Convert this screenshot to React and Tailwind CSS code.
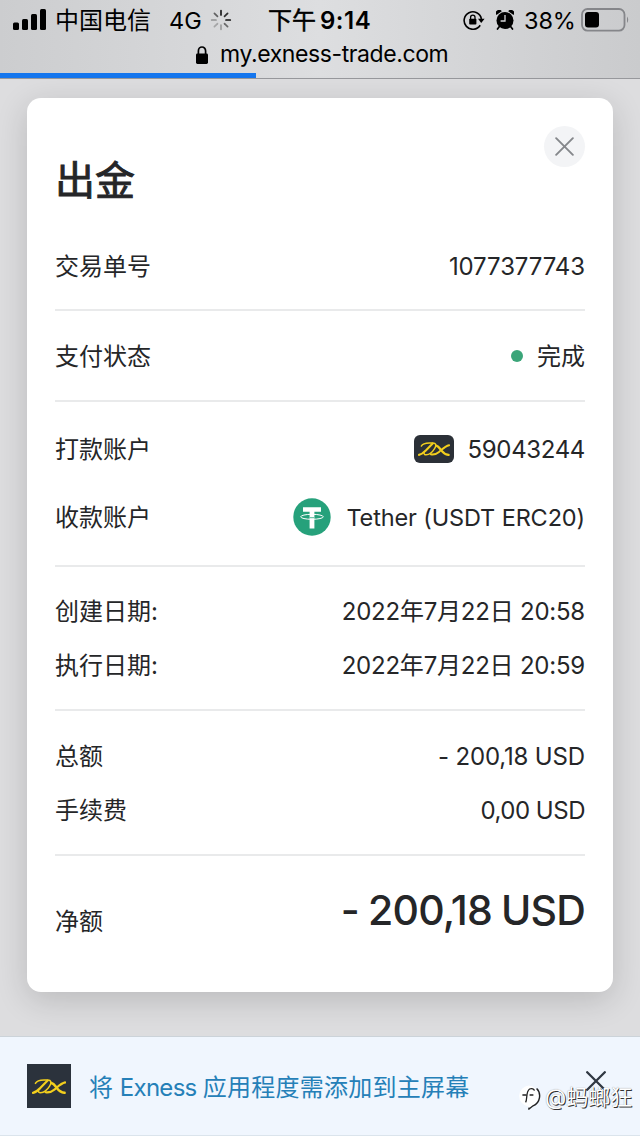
import React from "react";

const CJK = "font-['Inter','Noto_Sans_CJK_SC',sans-serif]";

function ExMark({ className }) {
  return (
    <svg viewBox="0 0 34 15" className={className} fill="none" stroke="#f3cf1d" strokeLinecap="round">
      <path d="M0.9 13.8C4.4 13.2 6 11.4 8.5 8.8L15.6 1.6" strokeWidth="2.2" />
      <path d="M3.4 4.4C4.8 1.6 8 1 12 1H15.4C19.6 1 19.6 4 17.6 7.2C15.4 10.8 12 13.7 8.6 13.7C6.8 13.7 6 12.8 6.4 11.2" strokeWidth="1.5" />
      <path d="M19.4 4C22 4.6 23.2 7 25 9.2C27 11.8 29 13.4 32.6 13.8" strokeWidth="2.5" />
      <path d="M33.2 3.4C28.6 4.4 25.6 8 22.4 10.6C20 12.6 17 13.8 13.6 13.2" strokeWidth="2.1" />
    </svg>
  );
}

function Tether() {
  return (
    <svg viewBox="0 0 38 38" className="h-[38px] w-[38px]">
      <circle cx="19" cy="19" r="18.7" fill="#26a17b" />
      <path d="M10 9.3H28V13.8H21.4V30.5H16.6V13.8H10Z" fill="#fff" />
      <ellipse cx="19" cy="18.8" rx="11.3" ry="2.5" fill="none" stroke="#fff" strokeWidth="1" />
      <path d="M16.8 19.7H21.2" stroke="#26a17b" strokeWidth="0.8" />
    </svg>
  );
}

function Signal() {
  return (
    <svg viewBox="0 0 33 22" className="h-[22px] w-[33px]">
      <rect x="0" y="13.5" width="6" height="7.5" rx="1.5" />
      <rect x="9" y="10" width="6" height="11" rx="1.5" />
      <rect x="18" y="5" width="6" height="16" rx="1.5" />
      <rect x="27" y="0" width="6" height="21" rx="1.5" />
    </svg>
  );
}

const SPOKES = [
  [0, 0.95], [45, 0.85], [90, 1], [135, 0.55], [180, 0.3], [225, 0.25], [270, 0.35], [315, 0.6],
];

function Spinner() {
  return (
    <svg viewBox="-11 -11 22 22" className="h-[22px] w-[22px]">
      {SPOKES.map(([angle, opacity]) => (
        <path key={angle} d="M0 -5V-9.3" transform={`rotate(${angle})`} stroke="#111" strokeWidth="1.7" strokeLinecap="round" opacity={opacity} />
      ))}
    </svg>
  );
}

function RotationLock() {
  return (
    <svg viewBox="0 0 22 20" className="h-[20px] w-[22px]" fill="none" stroke="#000" strokeWidth="1.6">
      <path d="M17.2 15.2A8.7 8.7 0 1 1 18.4 9" />
      <path d="M15 8.8H21.6L18.2 13Z" fill="#000" stroke="none" />
      <rect x="6.2" y="8.8" width="7.2" height="5.8" rx="0.8" fill="#000" stroke="none" />
      <path d="M7.6 9V7.3A2.2 2.2 0 0 1 12 7.3V9" strokeWidth="1.3" />
    </svg>
  );
}

function Alarm() {
  return (
    <svg viewBox="0 0 18 20" className="h-[20px] w-[18px]">
      <circle cx="9" cy="10.6" r="8.5" />
      <path d="M0.4 5A3 3 0 0 1 5.8 1.2ZM17.6 5A3 3 0 0 0 12.2 1.2Z" />
      <path d="M3.4 16.5L1.5 19M14.6 16.5L16.5 19" stroke="#000" strokeWidth="1.7" strokeLinecap="round" />
      <path d="M9 5V11H4.6" fill="none" stroke="#d4d5d7" strokeWidth="1.3" />
    </svg>
  );
}

function Battery() {
  return (
    <svg viewBox="0 0 48 24" className="h-[24px] w-[48px]">
      <rect x="1" y="1" width="42.5" height="21.6" rx="5.5" fill="none" stroke="#85868a" strokeWidth="1.8" />
      <rect x="4" y="4" width="14" height="15.4" rx="3" fill="#000" />
      <path d="M46 8.5Q48.4 11.6 46 15Z" fill="#85868a" />
    </svg>
  );
}

function PadLock() {
  return (
    <svg viewBox="0 0 12 18" className="h-[18px] w-[12px]">
      <rect x="0" y="7.6" width="12" height="10.4" rx="1.4" />
      <path d="M2.4 8.4V4.9A3.6 3.9 0 0 1 9.6 4.9V8.4" fill="none" stroke="#000" strokeWidth="1.7" />
    </svg>
  );
}

function Cross({ className, color, width }) {
  return (
    <svg viewBox="0 0 20 20" className={className} fill="none" stroke={color} strokeWidth={width} strokeLinecap="round">
      <path d="M1.2 1.2L18.8 18.8M18.8 1.2L1.2 18.8" />
    </svg>
  );
}

function WatermarkBadge() {
  return (
    <svg viewBox="0 0 24 26" className="h-[26px] w-[24px]">
      <path d="M11 1.5A10.6 10.6 0 0 1 14.6 21.6L10.6 24.8L10.4 22.4A10.5 10.5 0 0 1 11 1.5Z" fill="#fff" />
      <path d="M18.6 4.4C23.6 9 22.4 19 15 21.8L11 25L10.8 23.6" fill="none" stroke="#222" strokeWidth="1.4" />
      <path d="M4.4 11H8.2M7.6 18.4C9.6 15.4 7.6 7.4 11.6 5C14 4 16 5 16.4 6.6M11.6 11H15.4" fill="none" stroke="#222" strokeWidth="1.3" />
    </svg>
  );
}

function Row({ label, height, children }) {
  return (
    <div className={`flex items-center justify-between ${height}`}>
      <span className="pt-0.5">{label}</span>
      <div className="flex items-center">{children}</div>
    </div>
  );
}

const Rule = () => <div className="h-0.5 bg-[#e9eaeb]" />;

export default function App() {
  return (
    <div className={`flex h-[1136px] w-[640px] flex-col overflow-hidden bg-[#dddddf] text-[24px] leading-none text-[#252628] ${CJK}`}>
      <header className="h-[79px] shrink-0 border-b border-[#97989c] bg-linear-to-r from-[#cccdcf] via-[#dddee0] to-[#cacbcd] text-black">
        <div className="flex h-[40px] items-center">
          <div className="ml-[13px] w-[42px]"><Signal /></div>
          <span className="w-[114px] pt-0.5">中国电信</span>
          <span className="w-[41px] pt-0.5 text-[23.5px]">4G</span>
          <div className="w-[58px]"><Spinner /></div>
          <span className="w-[195px] pt-0.5 whitespace-nowrap [-webkit-text-stroke:0.5px_#000]">下午<span className="ml-1 text-[24px] font-semibold tracking-[0.5px] [-webkit-text-stroke:0]">9:14</span></span>
          <div className="w-[33px]"><RotationLock /></div>
          <div className="w-[28px]"><Alarm /></div>
          <span className="w-[57px] pt-0.5 text-[23.5px] tracking-[-0.1px]">38%</span>
          <Battery />
        </div>
        <div className="flex h-[33px] items-center pl-[196px] pb-1">
          <PadLock />
          <span className="ml-[12px] whitespace-nowrap text-[23px] tracking-[-0.4px]">my.exness-trade.com</span>
        </div>
        <div className="h-[5px] w-[256px] bg-[#1476ee]" />
      </header>

      <main className="h-[957px] shrink-0 px-[27px] pt-[19px]">
        <section className="h-[894px] rounded-[14px] bg-white px-[28px] shadow-[0_8px_32px_rgba(0,0,0,0.16)]">
          <div className="flex h-[124px] items-start justify-between">
            <h1 className="pt-[63px] text-[40px] font-normal [-webkit-text-stroke:0.9px_#252628]">出金</h1>
            <button className="mt-[28px] flex h-[41px] w-[41px] items-center justify-center rounded-full bg-[#f3f4f6]">
              <Cross className="h-[19px] w-[19px]" color="#85878b" width="2" />
            </button>
          </div>
          <Row label="交易单号" height="h-[87px]">
            <span className="pt-0.5 tracking-[-0.1px]">1077377743</span>
          </Row>
          <Rule />
          <Row label="支付状态" height="h-[89px]">
            <i className="mr-[14px] h-3 w-3 rounded-full bg-[#3ba579]" />
            <span className="pt-0.5">完成</span>
          </Row>
          <Rule />
          <div className="pt-[13px] pb-[14px]">
            <Row label="打款账户" height="h-[68px]">
              <div className="mr-[14px] flex h-[28px] w-[40px] items-center justify-center rounded-[6px] bg-[#2b3037]">
                <ExMark className="h-[14px] w-[32px]" />
              </div>
              <span className="pt-0.5 tracking-[-0.35px]">59043244</span>
            </Row>
            <Row label="收款账户" height="h-[68px]">
              <div className="mr-[15px]"><Tether /></div>
              <span className="pt-0.5 text-[23.5px] tracking-[-0.13px]">Tether (USDT ERC20)</span>
            </Row>
          </div>
          <Rule />
          <div className="py-[17px]">
            <Row label="创建日期:" height="h-[54px]"><span className="pt-0.5 tracking-[-0.22px]">2022年7月22日 20:58</span></Row>
            <Row label="执行日期:" height="h-[54px]"><span className="pt-0.5 tracking-[-0.22px]">2022年7月22日 20:59</span></Row>
          </div>
          <Rule />
          <div className="pt-[18px] pb-[17px]">
            <Row label="总额" height="h-[54px]"><span className="pt-0.5 tracking-[-0.15px]">- 200,18 USD</span></Row>
            <Row label="手续费" height="h-[54px]"><span className="pt-0.5 tracking-[-0.48px]">0,00 USD</span></Row>
          </div>
          <Rule />
          <div className="flex h-[137px] items-start justify-between">
            <span className="pt-[54px]">净额</span>
            <strong className="pt-[34px] text-[41px] font-medium tracking-[-0.82px] [word-spacing:-1px]">- 200,18 USD</strong>
          </div>
        </section>
      </main>

      <footer className="relative flex h-[100px] shrink-0 items-start border-t border-b border-t-[#ccd3d9] border-b-[#dbe4ec] bg-[#f0f6fe] px-[27px]">
        <div className="mt-[27px] flex h-[44px] w-[44px] items-center justify-center bg-[#2b323c]">
          <ExMark className="h-[15px] w-[34px]" />
        </div>
        <span className="ml-[18px] mt-[39px] whitespace-nowrap text-[#2580b8]">将 <span className="tracking-[-0.7px]">Exness </span><span className="tracking-[0.25px]">应用程度需添加到主屏幕</span></span>
        <Cross className="mt-[34px] ml-auto mr-[7px] h-[20px] w-[20px]" color="#303843" width="2.3" />
        <div className="absolute top-[47px] left-[518px] flex items-center">
          <WatermarkBadge />
          <span className="ml-[3px] whitespace-nowrap text-[22px] text-white [text-shadow:1px_1px_0_#333,0_0_1px_#888]">@蚂螂狂</span>
        </div>
      </footer>
    </div>
  );
}
